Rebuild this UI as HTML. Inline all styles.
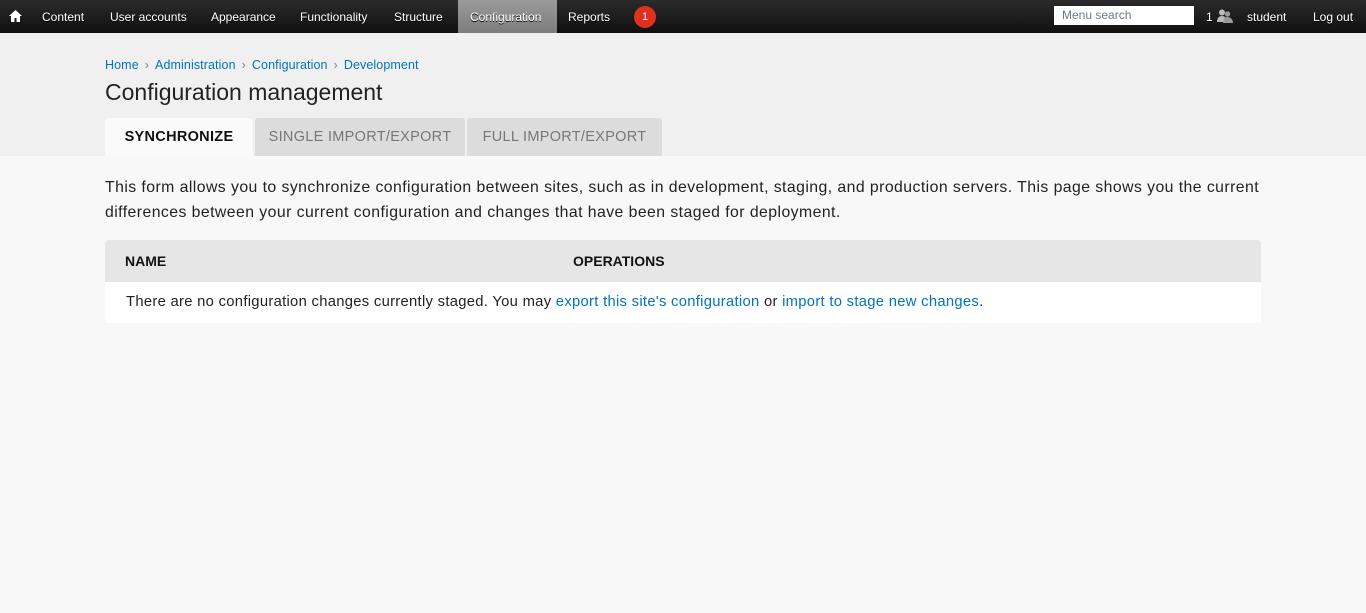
<!DOCTYPE html>
<html><head><meta charset="utf-8"><style>
*{margin:0;padding:0;box-sizing:border-box}
body{width:1366px;height:613px;background:#f8f8f8;font-family:"Liberation Sans",sans-serif;position:relative;overflow:hidden;color:#222}
.tb{position:absolute;left:0;top:0;width:1366px;height:33px;background:linear-gradient(#2b2b2b,#101010)}
.tb span{position:absolute;top:10px;color:#fff;font-size:12px;text-shadow:0 1px 0 #000;white-space:nowrap}
.cfg{position:absolute;left:458px;top:0;width:99px;height:33px;background:linear-gradient(#9a9a9a,#7d7d7d)}
.badge{position:absolute;left:634px;top:6px;width:22px;height:22px;border-radius:11px;background:#e0301e;color:#fff;font-size:11px;text-align:center;line-height:22px}
.search{position:absolute;left:1054px;top:6px;width:140px;height:19px;background:#fff;color:#6d7a88;font-size:12px;padding:2px 8px}
.hd{position:absolute;left:0;top:33px;width:1366px;height:123px;background:#f0f0f0}
.bc{position:absolute;left:105px;top:58px;font-size:12.5px;color:#0074bd;letter-spacing:.1px}
.bc i{font-style:normal;color:#888;margin:0 6px}
h1{position:absolute;left:105px;top:79px;font-weight:normal;font-size:23px;color:#222}
.tab{position:absolute;top:118px;height:38px;font-size:14.5px;text-align:center;line-height:38px;color:#777;background:#dcdcdc;border-radius:3px 3px 0 0;letter-spacing:.3px}
.tab.a{background:#fafafa;color:#111;font-weight:bold}
p.d{position:absolute;left:105px;top:176px;width:1180px;font-size:15.8px;line-height:24.5px;color:#222;letter-spacing:.44px;white-space:nowrap}
.th{position:absolute;left:105px;top:240px;width:1156px;height:42px;background:#e6e6e6;border-radius:4px 4px 0 0;font-weight:bold;font-size:14px;color:#111}
.th span{position:absolute;top:13px}
.tr{position:absolute;left:105px;top:282px;width:1156px;height:41px;background:#fff;font-size:14.8px;padding:12px 21px;color:#222;letter-spacing:.29px;white-space:nowrap}
a{color:#0074bd;text-decoration:none}
</style></head><body>
<div class="tb">
<svg style="position:absolute;left:9px;top:10px" width="13" height="12" viewBox="0 0 13 12"><path d="M6.5 0L0 6h2v6h3.5V8h2v4H11V6h2z" fill="#fff"/></svg>
<span style="left:42px">Content</span>
<span style="left:110px">User accounts</span>
<span style="left:211px">Appearance</span>
<span style="left:300px">Functionality</span>
<span style="left:394px">Structure</span>
<div class="cfg"></div>
<span style="left:470px">Configuration</span>
<span style="left:568px">Reports</span>
<div class="badge">1</div>
<div class="search">Menu search</div>
<span style="left:1206px">1</span>
<svg style="position:absolute;left:1217px;top:9px" width="16" height="14" viewBox="0 0 16 14"><circle cx="5" cy="3.5" r="3" fill="#bbb"/><path d="M0 13c0-4 2-6 5-6s5 2 5 6z" fill="#bbb"/><circle cx="10.5" cy="5" r="2.7" fill="#999"/><path d="M6 14c0-4 2-6 4.5-6S16 10 16 14z" fill="#999"/></svg>
<span style="left:1247px">student</span>
<span style="left:1313px">Log out</span>
</div>
<div class="hd"></div>
<div class="bc"><a>Home</a><i>›</i><a>Administration</a><i>›</i><a>Configuration</a><i>›</i><a>Development</a></div>
<h1>Configuration management</h1>
<div class="tab a" style="left:105px;width:148px">SYNCHRONIZE</div>
<div class="tab" style="left:255px;width:210px">SINGLE IMPORT/EXPORT</div>
<div class="tab" style="left:467px;width:195px">FULL IMPORT/EXPORT</div>
<p class="d">This form allows you to synchronize configuration between sites, such as in development, staging, and production servers. This page shows you the current<br>differences between your current configuration and changes that have been staged for deployment.</p>
<div class="th"><span style="left:20px">NAME</span><span style="left:468px">OPERATIONS</span></div>
<div class="tr">There are no configuration changes currently staged. You may <a>export this site's configuration</a> or <a>import to stage new changes</a>.</div>
</body></html>
